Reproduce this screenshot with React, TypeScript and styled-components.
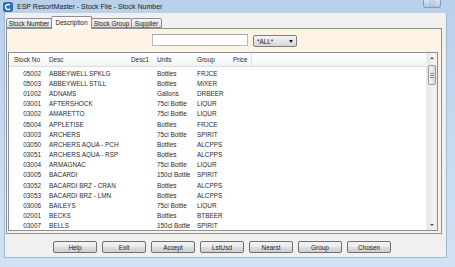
import React from 'react';
import styled, { createGlobalStyle } from 'styled-components';

type StockRow = {
  code: string;
  desc: string;
  units: string;
  group: string;
};

const rows: StockRow[] = [
  { code: '05002', desc: 'ABBEYWELL SPKLG', units: 'Bottles', group: 'FRJCE' },
  { code: '05003', desc: 'ABBEYWELL STILL', units: 'Bottles', group: 'MIXER' },
  { code: '01002', desc: 'ADNAMS', units: 'Gallons', group: 'DRBEER' },
  { code: '03001', desc: 'AFTERSHOCK', units: '75cl Bottle', group: 'LIQUR' },
  { code: '03002', desc: 'AMARETTO', units: '75cl Bottle', group: 'LIQUR' },
  { code: '05004', desc: 'APPLETISE', units: 'Bottles', group: 'FRJCE' },
  { code: '03003', desc: 'ARCHERS', units: '75cl Bottle', group: 'SPIRIT' },
  { code: '03050', desc: 'ARCHERS AQUA - PCH', units: 'Bottles', group: 'ALCPPS' },
  { code: '03051', desc: 'ARCHERS AQUA - RSP', units: 'Bottles', group: 'ALCPPS' },
  { code: '03004', desc: 'ARMAGNAC', units: '75cl Bottle', group: 'LIQUR' },
  { code: '03005', desc: 'BACARDI', units: '150cl Bottle', group: 'SPIRIT' },
  { code: '03052', desc: 'BACARDI BRZ - CRAN', units: 'Bottles', group: 'ALCPPS' },
  { code: '03053', desc: 'BACARDI BRZ - LMN', units: 'Bottles', group: 'ALCPPS' },
  { code: '03006', desc: 'BAILEYS', units: '75cl Bottle', group: 'LIQUR' },
  { code: '02001', desc: 'BECKS', units: 'Bottles', group: 'BTBEER' },
  { code: '03007', desc: 'BELLS', units: '150cl Bottle', group: 'SPIRIT' },
];

const tabs = [
  { label: 'Stock Number', width: 46 },
  { label: 'Description', width: 41, active: true },
  { label: 'Stock Group', width: 41 },
  { label: 'Supplier', width: 31 },
];

const buttons = ['Help', 'Exit', 'Accept', 'LstUsd', 'Nearst', 'Group', 'Chosen'];

const COLS = '36px 82px 26px 40px 36px 23px';

const GlobalStyle = createGlobalStyle`
  html, body {
    margin: 0;
    padding: 0;
    background: #ffffff;
  }
  body {
    font-family: "Liberation Sans", Arial, sans-serif;
  }
`;

const Window = styled.div`
  width: 455px;
  height: 267px;
  display: flex;
  flex-direction: column;
  overflow: hidden;
  font-size: 6.4px;
  color: #262626;
  background: linear-gradient(180deg, #b9d0eb 0%, #c4d8ef 45%, #d2e2f4 100%);
`;

const TitleBar = styled.div`
  height: 13px;
  flex: none;
  display: flex;
  align-items: flex-start;
`;

const AppIcon = styled.svg`
  width: 10px;
  height: 10px;
  margin: 2px 0 0 3px;
  flex: none;
`;

const Title = styled.span`
  margin: 2px 0 0 4px;
  font-size: 7px;
  line-height: 9px;
  color: #1b1b1b;
  white-space: nowrap;
`;

const CloseButton = styled.div`
  margin-left: auto;
  margin-right: 14px;
  width: 18px;
  height: 8px;
  box-sizing: border-box;
  border: 1px solid #8799b3;
  border-top: none;
  border-radius: 0 0 3px 3px;
  background: linear-gradient(180deg, #d4e1f1 0%, #b7cbe4 100%);
  color: #ffffff;
  font-size: 6.5px;
  line-height: 7px;
  font-weight: bold;
  text-align: center;
  text-shadow: 0 0 1px #4a5d78, 0 0 1px #4a5d78;
`;

const Client = styled.div`
  flex: 1;
  margin: 0 8px 9px 4px;
  display: flex;
  flex-direction: column;
  background: #f0f0f0;
  border-left: 1px solid #a4b7d0;
  border-right: 1px solid #a4b7d0;
  border-bottom: 1px solid #a4b7d0;
`;

const TabStrip = styled.div`
  height: 15px;
  flex: none;
  display: flex;
  align-items: flex-end;
  padding-left: 2px;
`;

const Tab = styled.div<{ $active?: boolean; $w: number }>`
  position: relative;
  width: ${p => p.$w}px;
  height: ${p => (p.$active ? 13 : 10)}px;
  margin-bottom: ${p => (p.$active ? -1 : 0)}px;
  margin-left: -1px;
  box-sizing: border-box;
  border: 1px solid #8c8e94;
  border-bottom: ${p => (p.$active ? 'none' : '1px solid #8c8e94')};
  border-radius: 2px 2px 0 0;
  background: ${p =>
    p.$active ? '#fdf8ef' : 'linear-gradient(180deg, #f5f5f5 0%, #e9e9e9 50%, #dcdcdc 100%)'};
  z-index: ${p => (p.$active ? 2 : 1)};
  display: flex;
  justify-content: center;
  align-items: ${p => (p.$active ? 'flex-start' : 'center')};
  padding-top: ${p => (p.$active ? 2 : 0)}px;
  line-height: 7px;
  white-space: nowrap;
  color: #1e1e1e;
`;

const Panel = styled.div`
  height: 206px;
  margin: 0 4px 0 1px;
  box-sizing: border-box;
  border: 1px solid #8c8e94;
  background: #fcf3e3;
  display: flex;
  flex-direction: column;
`;

const FilterBar = styled.div`
  height: 23px;
  flex: none;
  display: flex;
  align-items: flex-start;
  gap: 5px;
  padding: 5px 0 0 145px;
  box-sizing: border-box;
`;

const SearchBox = styled.div`
  width: 96px;
  height: 12px;
  box-sizing: border-box;
  background: #ffffff;
  border: 1px solid #b5b8be;
  border-top-color: #a0a4ab;
`;

const Combo = styled.div`
  width: 44px;
  height: 12px;
  margin-top: 1px;
  box-sizing: border-box;
  border: 1px solid #7d7d7d;
  border-radius: 2px;
  background: linear-gradient(180deg, #f4f4f4 0%, #e6e6e6 50%, #d6d6d6 100%);
  display: flex;
  align-items: center;
  padding: 0 3px 0 3px;
  line-height: 7px;
  color: #1a1a1a;
`;

const ComboArrow = styled.span`
  margin-left: auto;
  width: 0;
  height: 0;
  border-left: 2.5px solid transparent;
  border-right: 2.5px solid transparent;
  border-top: 3px solid #1a1a1a;
`;

const Grid = styled.div`
  height: 179px;
  margin: 0 3px 0 1px;
  box-sizing: border-box;
  border: 1px solid #8a8f98;
  background: #ffffff;
  display: flex;
`;

const Table = styled.div`
  flex: 1;
  display: flex;
  flex-direction: column;
  overflow: hidden;
`;

const HeaderRow = styled.div`
  height: 14px;
  flex: none;
  box-sizing: border-box;
  display: grid;
  grid-template-columns: ${COLS} 1fr;
  background: linear-gradient(180deg, #ffffff 0%, #f8f9fa 60%, #f0f1f4 100%);
  border-bottom: 1px solid #dcdee2;
`;

const HeaderCell = styled.div<{ $right?: boolean; $sep?: boolean }>`
  display: flex;
  align-items: center;
  justify-content: ${p => (p.$right ? 'flex-end' : 'flex-start')};
  padding: 0 4px;
  border-right: ${p => (p.$sep ? '1px solid #dfe1e5' : '1px solid transparent')};
  white-space: nowrap;
  color: #2e2e2e;
`;

const Body = styled.div`
  padding-top: 1px;
  display: flex;
  flex-direction: column;
`;

const Row = styled.div`
  height: 10.2px;
  display: grid;
  grid-template-columns: ${COLS} 1fr;
  align-items: center;
  line-height: 7px;
`;

const Cell = styled.span<{ $right?: boolean }>`
  padding: 0 4px;
  text-align: ${p => (p.$right ? 'right' : 'left')};
  white-space: nowrap;
  overflow: hidden;
  color: #2a2a2a;
`;

const ScrollBar = styled.div`
  width: 10px;
  flex: none;
  display: flex;
  flex-direction: column;
  align-items: center;
  background: linear-gradient(90deg, #e6e6e6 0%, #f2f2f2 60%, #ececec 100%);
  border-left: 1px solid #ececec;
`;

const ScrollArrow = styled.div<{ $down?: boolean }>`
  height: 10px;
  width: 100%;
  display: flex;
  align-items: center;
  justify-content: center;
  margin-top: ${p => (p.$down ? 'auto' : '0')};

  &::after {
    content: '';
    width: 0;
    height: 0;
    border-left: 2px solid transparent;
    border-right: 2px solid transparent;
    ${p => (p.$down ? 'border-top: 2px solid #4d4d4d;' : 'border-bottom: 2px solid #4d4d4d;')}
  }
`;

const Thumb = styled.div`
  width: 8px;
  height: 20px;
  margin-top: 2px;
  box-sizing: border-box;
  border: 1px solid #979797;
  border-radius: 2px;
  background: linear-gradient(90deg, #f4f4f4 0%, #e8e8e8 50%, #d9d9d9 100%);
  display: flex;
  flex-direction: column;
  justify-content: center;
  align-items: center;
  gap: 1px;
`;

const Grip = styled.div`
  width: 4px;
  height: 1px;
  background: #8a8a8a;
`;

const ButtonBar = styled.div`
  flex: 1;
  display: flex;
  align-items: flex-start;
  gap: 5px;
  padding: 7px 0 0 48px;
`;

const Button = styled.div`
  width: 44px;
  height: 12px;
  box-sizing: border-box;
  border: 1px solid #707070;
  border-radius: 2px;
  background: linear-gradient(180deg, #f3f3f3 0%, #ebebeb 48%, #dddddd 52%, #cfcfcf 100%);
  display: flex;
  align-items: center;
  justify-content: center;
  line-height: 7px;
  color: #1e1e1e;
`;

export default function App() {
  return (
    <>
      <GlobalStyle />
      <Window>
        <TitleBar>
          <AppIcon viewBox="0 0 10 10">
            <rect x="0.5" y="0.5" width="9" height="9" rx="1.5" fill="#2f6fb8" stroke="#1d4f8c" strokeWidth="0.6" />
            <path d="M7 3.2 A2.6 2.6 0 1 0 7 6.8" fill="none" stroke="#ffffff" strokeWidth="1.4" />
          </AppIcon>
          <Title>ESP ResortMaster - Stock File - Stock Number</Title>
          <CloseButton>X</CloseButton>
        </TitleBar>
        <Client>
          <TabStrip>
            {tabs.map(t => (
              <Tab key={t.label} $w={t.width} $active={t.active}>
                {t.label}
              </Tab>
            ))}
          </TabStrip>
          <Panel>
            <FilterBar>
              <SearchBox />
              <Combo>
                *ALL*
                <ComboArrow />
              </Combo>
            </FilterBar>
            <Grid>
              <Table>
                <HeaderRow>
                  <HeaderCell $right>Stock No</HeaderCell>
                  <HeaderCell>Desc</HeaderCell>
                  <HeaderCell>Desc1</HeaderCell>
                  <HeaderCell>Units</HeaderCell>
                  <HeaderCell>Group</HeaderCell>
                  <HeaderCell $sep>Price</HeaderCell>
                  <HeaderCell />
                </HeaderRow>
                <Body>
                  {rows.map(r => (
                    <Row key={r.code}>
                      <Cell $right>{r.code}</Cell>
                      <Cell>{r.desc}</Cell>
                      <Cell />
                      <Cell>{r.units}</Cell>
                      <Cell>{r.group}</Cell>
                      <Cell />
                      <Cell />
                    </Row>
                  ))}
                </Body>
              </Table>
              <ScrollBar>
                <ScrollArrow />
                <Thumb>
                  <Grip />
                  <Grip />
                  <Grip />
                </Thumb>
                <ScrollArrow $down />
              </ScrollBar>
            </Grid>
          </Panel>
          <ButtonBar>
            {buttons.map(b => (
              <Button key={b}>{b}</Button>
            ))}
          </ButtonBar>
        </Client>
      </Window>
    </>
  );
}
